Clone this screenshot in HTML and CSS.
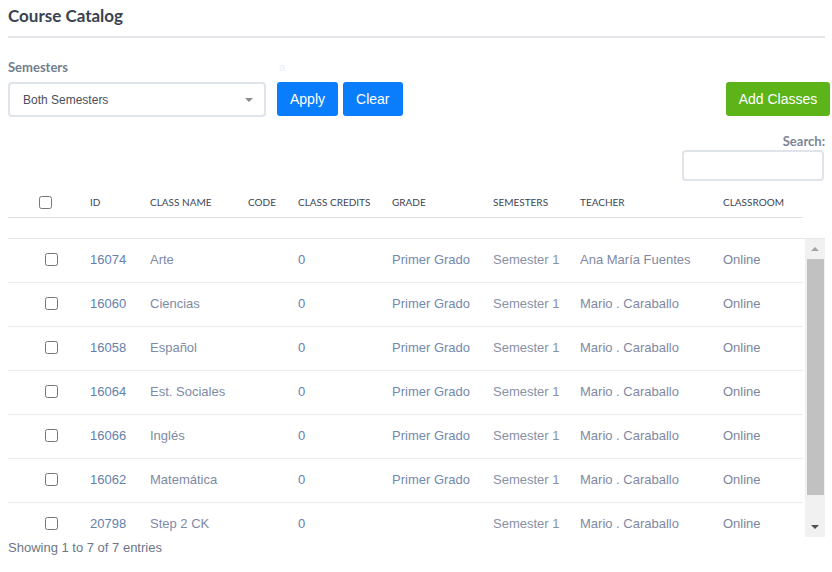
FILE: index.html
```html
<!DOCTYPE html>
<html>
<head>
<meta charset="utf-8">
<link rel="stylesheet" href="styles.css">
</head>
<body>
<div class="page">
  <h1 class="title">Course Catalog</h1>
  <div class="rule"></div>

  <div class="label-row">
    <span class="label">Semesters</span>
    <span class="ghost">a</span>
  </div>
  <div class="controls">
    <div class="select">
      <span>Both Semesters</span>
      <span class="caret"></span>
    </div>
    <button class="btn btn-blue">Apply</button>
    <button class="btn btn-blue">Clear</button>
    <span class="spacer"></span>
    <button class="btn btn-green">Add Classes</button>
  </div>

  <div class="search">
    <span class="search-label">Search:</span>
    <div class="search-input"></div>
  </div>

  <div class="thead grid">
    <div class="cell"><input type="checkbox" class="cb cb-head"></div>
    <div class="cell">ID</div>
    <div class="cell">Class Name</div>
    <div class="cell">Code</div>
    <div class="cell">Class Credits</div>
    <div class="cell">Grade</div>
    <div class="cell">Semesters</div>
    <div class="cell">Teacher</div>
    <div class="cell">Classroom</div>
  </div>

  <div class="scroll">
    <div class="tbody">
      <div class="row grid">
        <div class="cell"><input type="checkbox" class="cb"></div>
        <div class="cell c-id">16074</div><div class="cell c-name">Arte</div><div class="cell"></div>
        <div class="cell c-id">0</div><div class="cell c-grade">Primer Grado</div><div class="cell c-sem">Semester 1</div>
        <div class="cell c-teacher">Ana María Fuentes</div><div class="cell c-room">Online</div>
      </div>
      <div class="row grid">
        <div class="cell"><input type="checkbox" class="cb"></div>
        <div class="cell c-id">16060</div><div class="cell c-name">Ciencias</div><div class="cell"></div>
        <div class="cell c-id">0</div><div class="cell c-grade">Primer Grado</div><div class="cell c-sem">Semester 1</div>
        <div class="cell c-teacher">Mario . Caraballo</div><div class="cell c-room">Online</div>
      </div>
      <div class="row grid">
        <div class="cell"><input type="checkbox" class="cb"></div>
        <div class="cell c-id">16058</div><div class="cell c-name">Español</div><div class="cell"></div>
        <div class="cell c-id">0</div><div class="cell c-grade">Primer Grado</div><div class="cell c-sem">Semester 1</div>
        <div class="cell c-teacher">Mario . Caraballo</div><div class="cell c-room">Online</div>
      </div>
      <div class="row grid">
        <div class="cell"><input type="checkbox" class="cb"></div>
        <div class="cell c-id">16064</div><div class="cell c-name">Est. Sociales</div><div class="cell"></div>
        <div class="cell c-id">0</div><div class="cell c-grade">Primer Grado</div><div class="cell c-sem">Semester 1</div>
        <div class="cell c-teacher">Mario . Caraballo</div><div class="cell c-room">Online</div>
      </div>
      <div class="row grid">
        <div class="cell"><input type="checkbox" class="cb"></div>
        <div class="cell c-id">16066</div><div class="cell c-name">Inglés</div><div class="cell"></div>
        <div class="cell c-id">0</div><div class="cell c-grade">Primer Grado</div><div class="cell c-sem">Semester 1</div>
        <div class="cell c-teacher">Mario . Caraballo</div><div class="cell c-room">Online</div>
      </div>
      <div class="row grid">
        <div class="cell"><input type="checkbox" class="cb"></div>
        <div class="cell c-id">16062</div><div class="cell c-name">Matemática</div><div class="cell"></div>
        <div class="cell c-id">0</div><div class="cell c-grade">Primer Grado</div><div class="cell c-sem">Semester 1</div>
        <div class="cell c-teacher">Mario . Caraballo</div><div class="cell c-room">Online</div>
      </div>
      <div class="row grid">
        <div class="cell"><input type="checkbox" class="cb"></div>
        <div class="cell c-id">20798</div><div class="cell c-name">Step 2 CK</div><div class="cell"></div>
        <div class="cell c-id">0</div><div class="cell c-grade"></div><div class="cell c-sem">Semester 1</div>
        <div class="cell c-teacher">Mario . Caraballo</div><div class="cell c-room">Online</div>
      </div>
    </div>
    <div class="scrollbar">
      <div class="sb-btn"><span class="tri-up"></span></div>
      <div class="sb-thumb"></div>
      <div class="sb-track"></div>
      <div class="sb-btn"><span class="tri-down"></span></div>
    </div>
  </div>

  <div class="footer">Showing 1 to 7 of 7 entries</div>
</div>
</body>
</html>
```

FILE: styles.css
```css
html, body {
  margin: 0;
  padding: 0;
  background: #ffffff;
}
.page {
  padding: 0 7px 0 8px;
  font-family: "Liberation Sans", Arial, sans-serif;
}
.title {
  margin: 6px 0 0 0;
  font-family: Lato, "Liberation Sans", sans-serif;
  font-weight: 700;
  font-size: 17px;
  line-height: 20px;
  color: #3a4250;
}
.rule {
  margin-top: 10px;
  height: 2px;
  background: #e4e6ea;
}
.label-row {
  display: flex;
  margin-top: 21px;
  height: 16px;
  line-height: 16px;
}
.label {
  font-family: Lato, "Liberation Sans", sans-serif;
  font-weight: 700;
  font-size: 13px;
  color: #737e8e;
}
.ghost {
  margin-left: 211px;
  font-size: 11px;
  color: #e6f0fb;
}
.controls {
  display: flex;
  align-items: flex-start;
  margin-top: 7px;
}
.select {
  box-sizing: border-box;
  width: 258px;
  height: 35px;
  border: 2px solid #dfe3ea;
  border-radius: 4px;
  display: flex;
  align-items: center;
  justify-content: space-between;
  padding: 0 11px 0 13px;
  font-size: 12px;
  color: #4a4f57;
}
.caret {
  width: 0;
  height: 0;
  border-left: 4px solid transparent;
  border-right: 4px solid transparent;
  border-top: 4px solid #8a8a8a;
}
.btn {
  height: 34px;
  border: none;
  border-radius: 3px;
  padding: 0 13px;
  font-family: "Liberation Sans", Arial, sans-serif;
  font-size: 14px;
  color: #ffffff;
  cursor: pointer;
}
.btn-blue {
  background: #0a7dfc;
  margin-left: 5px;
}
.select + .btn-blue {
  margin-left: 11px;
}
.btn-green {
  background: #5db419;
  margin-right: -5px;
  width: 104px;
  padding: 0;
}
.spacer {
  flex: 1;
}
.search {
  display: flex;
  flex-direction: column;
  align-items: flex-end;
  margin-top: 16px;
}
.search-label {
  font-family: Lato, "Liberation Sans", sans-serif;
  font-weight: 700;
  font-size: 13px;
  line-height: 16px;
  color: #7d8797;
}
.search-input {
  box-sizing: border-box;
  margin-top: 1px;
  margin-right: 1px;
  width: 142px;
  height: 31px;
  border: 2px solid #dfe3ea;
  border-radius: 4px;
}
.grid {
  display: grid;
  grid-template-columns: 82px 60px 98px 50px 94px 101px 87px 143px 80px;
  align-items: center;
}
.thead {
  margin-top: 6px;
  width: 795px;
  height: 30px;
  border-bottom: 1px solid #dee2e6;
  font-family: Lato, "Liberation Sans", sans-serif;
  font-size: 10px;
  text-transform: uppercase;
  color: #3e4552;
}
.cell {
  white-space: nowrap;
  overflow: hidden;
}
.cb {
  display: block;
  margin: 0 0 0 37px;
  width: 13px;
  height: 13px;
}
.cb-head {
  margin-left: 31px;
}
.scroll {
  margin-top: 20px;
  border-top: 1px solid #e6e6e6;
  height: 298px;
  display: flex;
  gap: 2px;
}
.tbody {
  width: 795px;
  overflow: hidden;
}
.row {
  box-sizing: border-box;
  height: 44px;
  padding-bottom: 2px;
  border-bottom: 1px solid #ececec;
  font-size: 13px;
  color: #7d89a2;
}
.c-id { color: #6581aa; }
.c-name { color: #7e8aa4; }
.c-grade { color: #7389b0; }
.c-sem { color: #8891a5; }
.c-teacher { color: #7f89a3; }
.c-room { color: #7c8599; }
.scrollbar {
  width: 20px;
  background: #f1f1f1;
  display: flex;
  flex-direction: column;
  align-items: center;
}
.sb-btn {
  height: 20px;
  width: 20px;
  display: flex;
  align-items: center;
  justify-content: center;
  flex: none;
}
.tri-up {
  width: 0;
  height: 0;
  border-left: 4px solid transparent;
  border-right: 4px solid transparent;
  border-bottom: 4px solid #a3a3a3;
}
.tri-down {
  width: 0;
  height: 0;
  border-left: 4px solid transparent;
  border-right: 4px solid transparent;
  border-top: 4px solid #505050;
}
.sb-thumb {
  width: 17px;
  height: 236px;
  background: #c1c1c1;
  flex: none;
}
.sb-track {
  flex: 1;
}
.footer {
  font-size: 13px;
  line-height: 20px;
  padding-top: 1px;
  color: #6c7686;
}
```
